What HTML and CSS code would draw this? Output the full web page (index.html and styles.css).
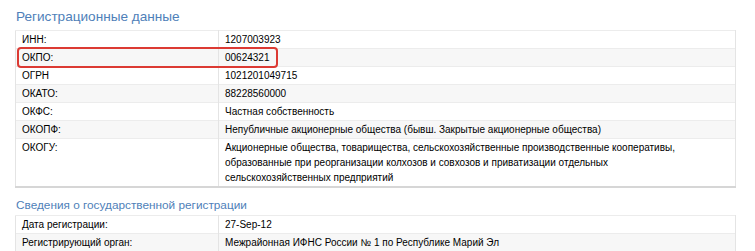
FILE: index.html
```html
<!DOCTYPE html>
<html lang="ru">
<head>
<meta charset="utf-8">
<link rel="stylesheet" href="styles.css">
</head>
<body>
<div class="page">
  <h2 class="section-title">Регистрационные данные</h2>
  <div class="table-wrap">
    <table class="info">
      <tr><td class="label">ИНН:</td><td>1207003923</td></tr>
      <tr><td class="label">ОКПО:</td><td>00624321</td></tr>
      <tr><td class="label">ОГРН</td><td>1021201049715</td></tr>
      <tr><td class="label">ОКАТО:</td><td>88228560000</td></tr>
      <tr><td class="label">ОКФС:</td><td>Частная собственность</td></tr>
      <tr><td class="label">ОКОПФ:</td><td>Непубличные акционерные общества (бывш. Закрытые акционерные общества)</td></tr>
      <tr><td class="label">ОКОГУ:</td><td>Акционерные общества, товарищества, сельскохозяйственные производственные кооперативы,<br>образованные при реорганизации колхозов и совхозов и приватизации отдельных<br>сельскохозяйственных предприятий</td></tr>
    </table>
    <div class="highlight"></div>
  </div>
  <h2 class="section-title second">Сведения о государственной регистрации</h2>
  <table class="info">
    <tr><td class="label">Дата регистрации:</td><td>27-Sep-12</td></tr>
    <tr><td class="label">Регистрирующий орган:</td><td>Межрайонная ИФНС России № 1 по Республике Марий Эл</td></tr>
  </table>
</div>
</body>
</html>
```

FILE: styles.css
```css
html, body {
  margin: 0;
  padding: 0;
  background: #ffffff;
}
.page {
  padding: 0 19px 0 15px;
  font-family: "Liberation Sans", Arial, sans-serif;
}
.section-title {
  margin: 0;
  padding: 9px 0 0 1px;
  height: 21px;
  font-size: 13.6px;
  font-weight: normal;
  color: #4f7fb9;
  line-height: 16px;
}
.section-title.second {
  font-size: 11.8px;
  padding-top: 10px;
  height: 17px;
  line-height: 14px;
}
.table-wrap {
  position: relative;
}
.info {
  width: 721px;
  border-collapse: collapse;
  border-top: 1px solid #cfcfcf;
  border-bottom: 2px solid #d6d6d6;
  font-size: 10px;
  color: #000;
}
.info td {
  padding: 1px 6px 1px 6px;
  line-height: 15px;
  vertical-align: top;
  border-left: 1px solid #e4e4e4;
  border-right: 1px solid #e4e4e4;
  border-top: 1px solid #ececec;
}
.info td.label {
  width: 190px;
}
.info tr:nth-child(even) td {
  background: #f7f7f7;
}
.highlight {
  position: absolute;
  left: 2px;
  top: 17px;
  width: 257px;
  height: 17px;
  border: 2px solid #dc3a33;
  border-radius: 4px;
}
```
